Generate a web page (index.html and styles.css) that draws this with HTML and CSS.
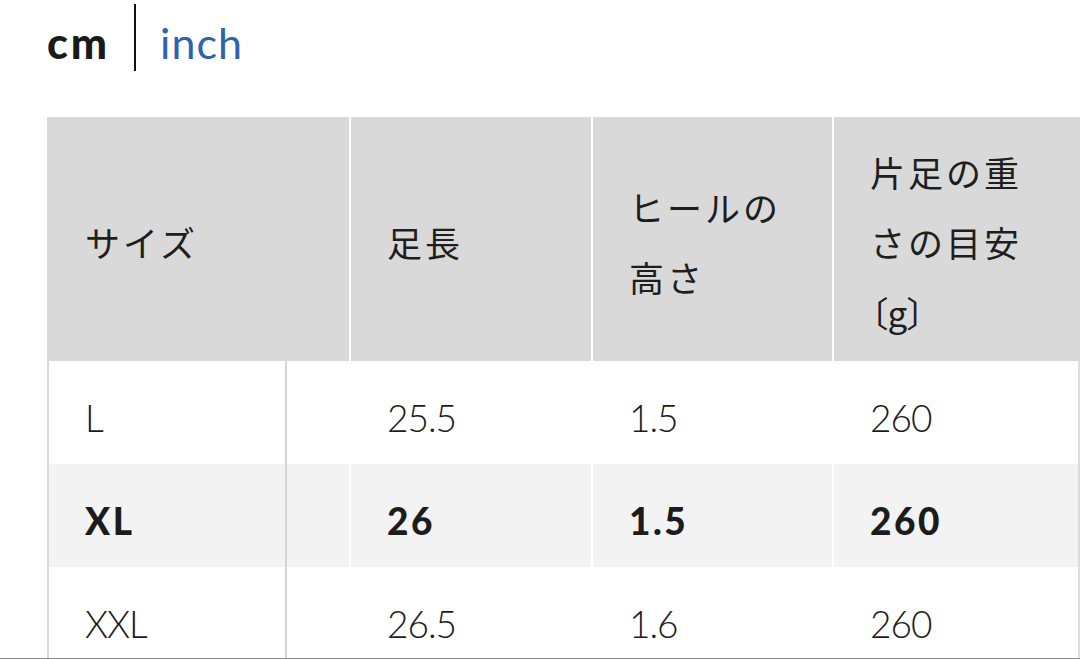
FILE: index.html
```html
<!DOCTYPE html>
<html lang="ja">
<head>
<meta charset="utf-8">
<title>サイズ表</title>
<link rel="stylesheet" href="styles.css">
</head>
<body>
<div class="page">
  <div class="units">
    <span class="unit unit-active">cm</span>
    <span class="unit-sep"></span>
    <span class="unit unit-link">inch</span>
  </div>
  <table class="size-table">
    <colgroup>
      <col class="c-name">
      <col class="c-gap">
      <col class="c-len">
      <col class="c-heel">
      <col class="c-weight">
    </colgroup>
    <thead>
      <tr>
        <th colspan="2" class="th-first">サイズ</th>
        <th class="th-col">足長</th>
        <th class="th-col">ヒールの<br>高さ</th>
        <th class="th-col th-last">片足の重<br>さの目安<br><span class="bracket">〔g〕</span></th>
      </tr>
    </thead>
    <tbody>
      <tr>
        <td class="td-name">L</td>
        <td class="td-gap"></td>
        <td class="td-col">25.5</td>
        <td class="td-col">1.5</td>
        <td class="td-col td-last">260</td>
      </tr>
      <tr class="row-hl">
        <td class="td-name">XL</td>
        <td class="td-gap"></td>
        <td class="td-col">26</td>
        <td class="td-col">1.5</td>
        <td class="td-col td-last">260</td>
      </tr>
      <tr>
        <td class="td-name">XXL</td>
        <td class="td-gap"></td>
        <td class="td-col">26.5</td>
        <td class="td-col">1.6</td>
        <td class="td-col td-last">260</td>
      </tr>
    </tbody>
  </table>
</div>
</body>
</html>
```

FILE: styles.css
```css
html, body {
  margin: 0;
  padding: 0;
  background: #ffffff;
}

.page {
  width: 1080px;
  height: 658px;
  overflow: hidden;
  border-bottom: 1px solid #8a8a8a;
  font-family: "Lato", "Noto Sans CJK JP", sans-serif;
  color: #1c1c1c;
}

.units {
  display: flex;
  align-items: center;
  height: 74px;
  padding-left: 47px;
  margin-bottom: 43px;
}

.unit {
  font-size: 43px;
  line-height: 1;
  position: relative;
  top: 5px;
}

.unit-active {
  font-weight: 900;
  color: #1a1a1a;
  letter-spacing: 3px;
}

.unit-link {
  font-weight: 400;
  color: #2f62ad;
  letter-spacing: 1px;
}

.unit-sep {
  width: 2px;
  height: 67px;
  background: #111111;
  margin: 0 24px 0 24px;
}

.size-table {
  margin-left: 47px;
  width: 1033px;
  border-collapse: separate;
  border-spacing: 0;
  table-layout: fixed;
}

.c-name { width: 240px; }
.c-gap { width: 62px; }
.c-len { width: 242px; }
.c-heel { width: 241px; }
.c-weight { width: 248px; }

.size-table th {
  background: #d9d9d9;
  font-family: "Noto Sans CJK JP", sans-serif;
  font-weight: 400;
  font-size: 35px;
  letter-spacing: 3px;
  line-height: 70px;
  text-align: left;
  vertical-align: middle;
  padding: 20px 0 14px 36px;
  height: 210px;
  color: #1e1e1e;
}

.size-table th.th-first {
  padding-left: 38px;
}

.size-table th.th-col {
  border-left: 2px solid #ffffff;
}

.bracket {
  font-feature-settings: "palt";
  letter-spacing: 0;
}

.size-table td {
  height: 103px;
  font-size: 37px;
  font-weight: 300;
  letter-spacing: -1px;
  vertical-align: middle;
  text-align: left;
  color: #1c1c1c;
  padding: 10px 0 0 0;
  box-sizing: border-box;
}

.size-table td.td-name {
  border-left: 2px solid #d9d9d9;
  border-right: 2px solid #d4d4d4;
  padding-left: 36px;
}

.size-table td.td-col {
  border-left: 2px solid #ffffff;
  padding-left: 36px;
}

.size-table td.td-last {
  border-right: 2px solid #dddddd;
}

.size-table .row-hl td {
  background: #f3f3f3;
  font-weight: 900;
  letter-spacing: 2.5px;
}
```
